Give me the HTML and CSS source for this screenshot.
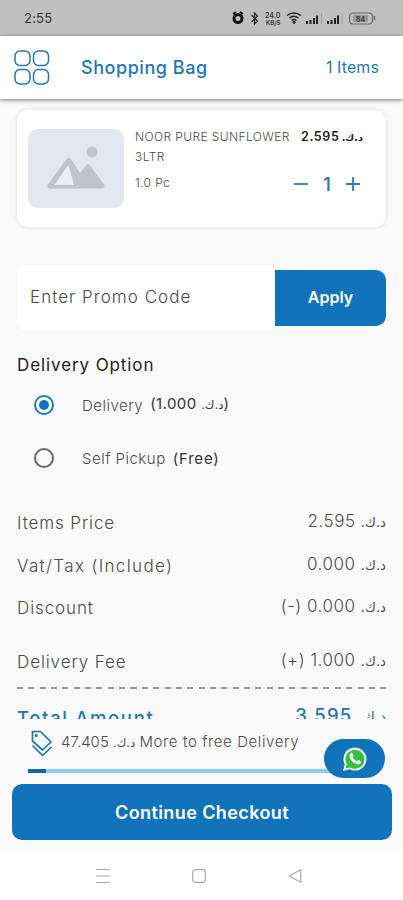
FILE: index.html
```html
<!DOCTYPE html>
<html lang="en">
<head>
<meta charset="utf-8">
<title>Shopping Bag</title>
<link rel="stylesheet" href="styles.css">
</head>
<body>
<div class="phone">
  <div class="status">
    <span class="clock">2:55</span>
    <svg class="status-icons" width="146" height="18" viewBox="0 0 146 18">
      <g fill="none" stroke="#222" stroke-width="1.2">
        <circle cx="8" cy="9.500" r="4" stroke-width="3" stroke="#111"/>
        <path d="M3 5l3-2M13 5l-3-2" stroke-width="2" stroke="#111"/>
        <path d="M21.500 6l6 6-3 3V4l3 3-6 6"/>
        <path d="M57 6.500q6.500-5 14 0M59.500 9q4-3.500 9 0M61.500 11.500q2.500-2 5 0" stroke-width="1.500"/>
        <rect x="119.500" y="4" width="23" height="11" rx="3.500" stroke="#666"/>
        <path d="M144.500 7v4" stroke="#666" stroke-width="1.500"/>
      </g>
      <g fill="#222">
        <circle cx="64" cy="13.300" r="1.500"/>
        <path d="M76 12h2v3h-2zM79.500 11h2v4h-2zM83 9h2v6h-2zM86 6.500h2V15h-2zM97 12h2v3h-2zM100.500 11h2v4h-2zM104 9h2v6h-2zM107 6.500h2V15h-2z"/>
      </g>
      <path d="M91.500 4v11M112 4v11" stroke="#a4a4a4"/>
      <text x="35" y="9" class="tiny">24.0</text>
      <text x="36" y="16" class="tiny small">KB/S</text>
      <rect x="123" y="6" width="15" height="7" rx="1" fill="#999"/>
      <text x="126" y="12.500" class="tiny">84</text>
    </svg>
  </div>
  <header class="header">
    <svg class="grid-icon" width="36" height="36" viewBox="0 0 36 36" fill="none" stroke="#2476b3" stroke-width="1.500">
      <rect x="1" y="1" width="15" height="14.500" rx="5"/><rect x="19.500" y="1" width="15" height="14.500" rx="5"/>
      <rect x="1" y="19.500" width="15" height="14.500" rx="5"/><rect x="19.500" y="19.500" width="15" height="14.500" rx="5"/>
    </svg>
    <h1 class="title">Shopping Bag</h1>
    <span class="count">1 Items</span>
  </header>
  <main class="content">
    <section class="card">
      <div class="thumb">
        <svg width="60" height="46" viewBox="0 0 60 46">
          <circle cx="46" cy="6" r="5.500" fill="#bcc4ce"/>
          <path d="M4 40L22.500 14.500L34 31L42 21L56 40Z" fill="#bcc4ce" stroke="#bcc4ce" stroke-width="5" stroke-linejoin="round"/>
          <path d="M8.500 39L22.500 18.500L28 39Z" fill="#e9edf7"/>
        </svg>
      </div>
      <div class="info">
        <div class="line"><span class="name">NOOR PURE SUNFLOWER<br>3LTR</span><span class="price">2.595 <bdi dir="rtl">د.ك.</bdi></span></div>
        <div class="line qty-line"><span class="unit">1.0 Pc</span>
          <span class="qty"><svg width="14" height="14" viewBox="0 0 14 14"><path d="M0 7h14" stroke="#2a7ebb" stroke-width="1.800"/></svg><b>1</b><svg width="14" height="14" viewBox="0 0 14 14"><path d="M0 7h14M7 0v14" stroke="#2a7ebb" stroke-width="1.800"/></svg></span>
        </div>
      </div>
    </section>
    <section class="promo">
      <span class="promo-field">Enter Promo Code</span>
      <span class="apply">Apply</span>
    </section>
    <h2 class="subhead">Delivery Option</h2>
    <div class="option"><i class="radio on"></i><span class="opt-name">Delivery</span><span class="opt-cost raised">(1.000 <bdi dir="rtl">د.ك.</bdi>)</span></div>
    <div class="option second"><i class="radio"></i><span class="opt-name">Self Pickup</span><span class="opt-cost free-cost">(Free)</span></div>
    <section class="totals">
      <div class="row"><span class="label">Items Price</span><span class="value">2.595 <bdi dir="rtl">د.ك.</bdi></span></div>
      <div class="row"><span class="label tax">Vat/Tax (Include)</span><span class="value">0.000 <bdi dir="rtl">د.ك.</bdi></span></div>
      <div class="row"><span class="label">Discount</span><span class="value">(-) 0.000 <bdi dir="rtl">د.ك.</bdi></span></div>
      <div class="row fee"><span class="label">Delivery Fee</span><span class="value">(+) 1.000 <bdi dir="rtl">د.ك.</bdi></span></div>
      <div class="dash"></div>
      <div class="row total"><span class="label">Total Amount</span><span class="value">3.595 <bdi dir="rtl">د.ك.</bdi></span></div>
    </section>
  </main>
  <footer class="footer">
    <div class="free">
      <svg width="22" height="28" viewBox="0 0 22 28" fill="none" stroke="#1a73b5" stroke-width="1.700" stroke-linejoin="round">
        <path d="M1.500 1.500H9.500L20 12L11.500 20L1.500 11Z"/><path d="M1.500 15.500L11.500 25.500L20.500 17"/><circle cx="5.300" cy="5.500" r=".7"/>
      </svg>
      <span class="free-text">47.405 <bdi dir="rtl">د.ك.</bdi> <span class="more">More to free Delivery</span></span>
    </div>
    <div class="bar"><div class="fill"></div></div>
    <div class="checkout">Continue Checkout</div>
    <div class="fab">
      <svg width="26" height="26" viewBox="0 0 26 26">
        <path d="M1 25l1.800-6.500A11.500 11.500 0 1 1 7.500 23.200Z" fill="#fff"/>
        <path d="M3.400 22.600l1.300-4.600A9.500 9.500 0 1 1 8 21.400Z" fill="#35c043"/>
        <path d="M8.700 7.200c.8-.8 1.500-.6 1.900.3l.9 2c.3.700-.9 1.500-.7 2 .8 1.700 2 2.800 3.700 3.500.6.200 1.300-1.300 2-.9l2 1c.9.400.6 1.500.1 2.100-1.200 1.400-3.200 1.300-5.300.3-2.700-1.200-4.700-3.300-5.500-5.700-.6-1.800-.3-3.500.9-4.600Z" fill="#fff"/>
      </svg>
    </div>
  </footer>
  <nav class="nav">
    <svg width="14" height="16" viewBox="0 0 14 16"><path d="M0 1.500h14M0 8h14M0 14.500h14" stroke="#aaa" stroke-width="1.200"/></svg>
    <svg width="14" height="16" viewBox="0 0 14 16"><rect x=".7" y="1.700" width="12.600" height="12.600" rx="2.500" fill="none" stroke="#aaa" stroke-width="1.200"/></svg>
    <svg width="14" height="16" viewBox="0 0 14 16"><path d="M1 8L12.800 1.800V14.200Z" fill="none" stroke="#aaa" stroke-width="1.200" stroke-linejoin="round"/></svg>
  </nav>
</div>
</body>
</html>
```
FILE: styles.css
```css
* { box-sizing: border-box; }
body { margin: 0; font-family: Inter, "DejaVu Sans", sans-serif; color: #4a4a4a; background: #fafafa; }
h1, h2 { margin: 0; font-weight: 500; }
bdi { font-family: "DejaVu Sans", sans-serif; font-size: .78em; letter-spacing: 0; font-weight: 400; display: inline-block; }
.phone { width: 403px; height: 900px; display: flex; flex-direction: column; overflow: hidden; white-space: nowrap; }
.status { height: 36px; flex: none; background: #bfbfbf; display: flex; justify-content: space-between; align-items: center; padding: 0 28px 0 24px; }
.clock { font-size: 13px; letter-spacing: .2px; color: #333; }
.status-icons { margin-right: -1px; }
.tiny { font-size: 7px; font-weight: 600; fill: #333; }
.small { font-size: 6px; }
.header { height: 63px; flex: none; background: #fff; display: flex; align-items: center; padding: 0 24px 0 14px; box-shadow: 0 1px 4px rgba(0,0,0,.55); z-index: 1; color: #2476b3; }
.title { font-size: 18px; margin-left: 31px; letter-spacing: .55px; }
.count { margin-left: auto; font-size: 16px; font-weight: 400; letter-spacing: .1px; margin-top: -1px; }
.content { height: 620px; flex: none; overflow: hidden; padding: 11px 17px 0; }
.card { height: 117px; border-radius: 11px; background: #fff; box-shadow: 0 0 5px rgba(0,0,0,.13); display: flex; padding: 19px 23px 0 11px; }
.thumb { width: 96px; height: 79px; flex: none; border-radius: 10px; background: #e2e7f2; display: flex; align-items: center; justify-content: center; }
.thumb svg { margin-top: 1px; }
.info { flex: 1; margin-left: 11px; margin-top: -2px; }
.line { display: flex; justify-content: space-between; }
.name { font-size: 12px; line-height: 20px; font-weight: 300; letter-spacing: .4px; }
.price { font-size: 12.5px; line-height: 19px; font-weight: 600; color: #222; letter-spacing: .6px; word-spacing: -1.5px; }
.price bdi { font-weight: 700; }
.qty-line { align-items: center; margin-top: 2px; height: 30px; }
.unit { font-size: 12px; font-weight: 300; letter-spacing: .4px; margin-top: -3px; }
.qty { display: flex; align-items: center; gap: 15px; margin-right: 3px; color: #2476b3; font-size: 19px; }
.qty b { font-weight: 500; }
.promo { display: flex; align-items: center; margin-top: 38px; height: 65px; }
.promo-field { width: 258px; height: 65px; line-height: 64px; padding-left: 13px; background: #fff; font-size: 17px; font-weight: 300; border-radius: 8px 0 0 8px; letter-spacing: 1.05px; }
.apply { width: 111px; height: 56px; background: #1174ba; color: #fff; font-size: 16px; font-weight: 600; line-height: 55px; text-align: center; border-radius: 0 10px 10px 0; }
.subhead { height: 24px; line-height: 24px; margin-top: 23px; font-size: 17px; font-weight: 400; color: #222; letter-spacing: .9px; }
.option { height: 40px; margin-top: 8px; padding-left: 17px; display: flex; align-items: center; font-size: 15px; }
.option.second { margin-top: 13px; }
.radio { width: 20px; height: 20px; flex: none; border: 2px solid #666; border-radius: 50%; margin-right: 28px; }
.radio.on { border-color: #2178ba; background: #1174ba; background-clip: content-box; padding: 3px; }
.opt-name { font-weight: 300; letter-spacing: .5px; }
.opt-cost { margin-left: 7px; color: #333; letter-spacing: .4px; }
.raised { margin-top: -4px; }
.free-cost { letter-spacing: .8px; }
.totals { margin-top: 24px; }
.row { display: flex; justify-content: space-between; height: 42.500px; line-height: 42px; font-size: 17px; font-weight: 300; }
.label { letter-spacing: .9px; }
.tax { letter-spacing: 1.35px; }
.row .value { margin-top: -2px; letter-spacing: .5px; }
.fee { margin-top: 11px; }
.dash { height: 2px; margin-top: 4px; background: repeating-linear-gradient(90deg, #999 0 6px, transparent 6px 11.350px); }
.total { color: #2476b3; font-weight: 500; font-size: 18.5px; margin-top: 8px; }
.total .label { letter-spacing: 1.65px; }
.total .value { letter-spacing: 1.2px; margin-top: -3px; }
.footer { height: 133px; flex: none; position: relative; background: #fafafa; }
.free { display: flex; align-items: center; height: 50px; padding: 0 0 0 31px; }
.free-text { margin-left: 8px; margin-top: -5px; font-size: 15px; font-weight: 300; }
.more { letter-spacing: .6px; }
.bar { height: 4px; margin: 0 24px 0 28px; background: #90caf9; }
.fill { width: 18px; height: 4px; background: #0e6aab; }
.checkout { height: 56px; margin: 11px 11px 0 12px; border-radius: 10px; background: #1174ba; color: #fff; text-align: center; line-height: 57px; font-size: 18px; font-weight: 600; letter-spacing: .4px; }
.fab { position: absolute; left: 324px; top: 20px; width: 61px; height: 39px; border-radius: 20px; background: #1174ba; display: flex; align-items: center; justify-content: center; }
.nav { flex: 1; background: #fff; display: flex; justify-content: center; align-items: center; gap: 82px; padding-right: 6px; }
```
